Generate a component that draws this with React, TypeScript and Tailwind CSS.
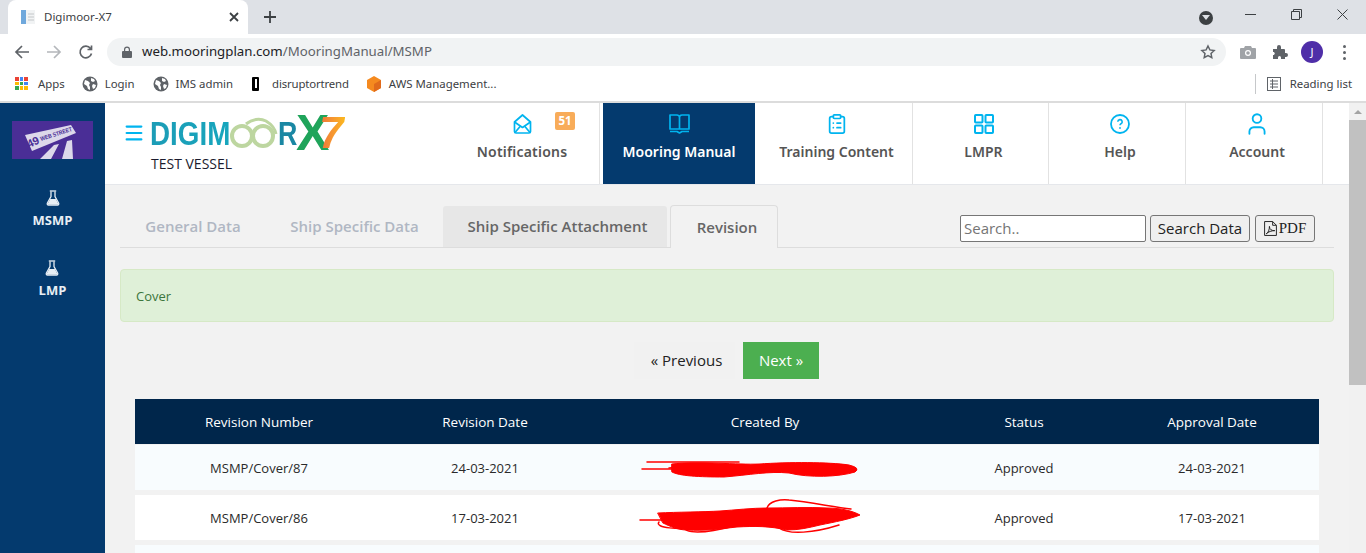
import { ClipboardList, Menu, User } from 'lucide-react'
import type { ReactNode } from 'react'

const GridIcon = () => (
  <svg width="20" height="20" viewBox="0 0 20 20" fill="none" stroke="#00b4ef" strokeWidth="2">
    <rect x="1" y="1" width="7.5" height="7.5" rx=".8" />
    <rect x="11.500" y="1" width="7.500" height="7.500" rx=".8" />
    <rect x="1" y="11.500" width="7.500" height="7.500" rx=".8" />
    <rect x="11.500" y="11.500" width="7.500" height="7.500" rx=".8" />
  </svg>
)

const HelpIcon = () => (
  <svg width="20" height="20" viewBox="0 0 20 20" fill="none" stroke="#00b4ef" strokeWidth="1.800">
    <circle cx="10" cy="10" r="9" />
    <path d="M7.800 7.800a2.200 2.200 0 1 1 3.200 2c-.7.400-1 .8-1 1.500" strokeWidth="1.600" />
    <circle cx="10" cy="14" r=".9" fill="#00b4ef" stroke="none" />
  </svg>
)

const navItems: { label: string; icon: ReactNode; width: string }[] = [
  { label: 'Training Content', icon: <ClipboardList size={22} strokeWidth={1.9} className="text-[#00b4ef]" />, width: 'w-[158px]' },
  { label: 'LMPR', icon: <GridIcon />, width: 'w-[136px]' },
  { label: 'Help', icon: <HelpIcon />, width: 'w-[137px]' },
  { label: 'Account', icon: <User size={26} strokeWidth={1.7} className="text-[#00b4ef]" />, width: 'w-[137px]' },
]

const rows = [
  { number: 'MSMP/Cover/87', date: '24-03-2021', bg: 'bg-[#f8fcfe]', scribble: 0 },
  { number: 'MSMP/Cover/86', date: '17-03-2021', bg: 'bg-white', scribble: 1 },
]

const Globe = () => (
  <svg width="16" height="16" viewBox="0 0 16 16">
    <circle cx="8" cy="8" r="7.500" fill="#5f6368" />
    <path d="M3 4l3 1 2 2-1 2 1 2v3l-2-1-1-3-3-2zM9 2l3 1 1 2-2 1-2-1zM11 8l3 1-1 3-2 1-1-3z" fill="#fff" />
  </svg>
)

const Flask = () => (
  <svg width="14" height="16" viewBox="0 0 14 16" fill="none">
    <path d="M5 1.500v5L1.400 13c-.5.900.1 2 1 2h9.200c.9 0 1.500-1.100 1-2L9 6.500v-5" stroke="#e8eef4" strokeWidth="1.300" />
    <path d="M4.200 9h5.600l2.400 4.400c.2.600 0 1-.6 1H2.400c-.6 0-.8-.4-.6-1z" fill="#e8eef4" />
    <path d="M3.800 1h6.400" stroke="#e8eef4" strokeWidth="1.300" />
  </svg>
)

const Scribble = ({ kind }: { kind: number }) =>
  kind === 0 ? (
    <svg width="220" height="30" viewBox="0 0 220 30" fill="none" stroke="#ff0000" strokeLinecap="round">
      <path d="M8 9h92M3 16h60" strokeWidth="1.500" />
      <path d="M33 11C60 8 100 12 120 11c30-2 70-2 90 1q12 3 6 7c-16 5-46 6-66 1-20-2-40 2-65 4-25 0-45-1-52-5z" fill="#ff0000" strokeWidth="1" />
      <path d="M30 15c20-2 30-3 45-2" strokeWidth="1.500" />
    </svg>
  ) : (
    <svg width="224" height="40" viewBox="0 0 224 40" fill="none" stroke="#ff0000" strokeLinecap="round">
      <path d="M1 22h60" strokeWidth="1.500" />
      <path d="M19 15c20-1 45-1 62-2 15-1 32-3 47-3 20 0 42-1 60 0 14 0 26 3 33 7-10 4-25 7-40 10-12 3-22 5-33 5-18-4-32-4-50-3-18 2-32 4-50 3-8 0-16-3-24-7z" fill="#ff0000" strokeWidth="1" />
      <path d="M128 10c2-7 14-9 22-8 20 2 45 7 62 9M20 24c-5 6 20 8 40 5M44 28c1 8 21 8 51 0M140 30c10 7 35 5 60-3" strokeWidth="1.500" />
    </svg>
  )

export default function App() {
  return (
    <div className="h-[553px] w-[1366px] overflow-hidden flex flex-col bg-white font-['Noto_Sans',sans-serif]">
      {/* tab strip */}
      <div className="h-[34px] shrink-0 bg-[#dee1e6] flex items-end pl-2">
        <div className="h-[34px] w-[240px] bg-white rounded-t-lg flex items-center pl-[12px] pr-[8px]">
          <svg width="16" height="16" viewBox="0 0 16 16" className="shrink-0 mr-[8px]">
            <rect x="1" y="1" width="14" height="14" fill="#f1f3f4" />
            <rect x="1" y="1" width="5" height="14" fill="#6fa8dc" />
            <path d="M8 5h6M8 8h6M8 11h6" stroke="#c4c7c9" />
          </svg>
          <span className="text-[11.500px] text-[#3c4043] flex-1">Digimoor-X7</span>
          <svg width="10" height="10" viewBox="0 0 10 10" stroke="#3c4043" strokeWidth="1.800" className="mr-[1px]">
            <path d="M1 1l8 8M9 1l-8 8" />
          </svg>
        </div>
        <svg width="14" height="14" viewBox="0 0 14 14" stroke="#3c4043" strokeWidth="1.800" className="ml-[15px] mb-[10px]">
          <path d="M7 1v12M1 7h12" />
        </svg>
        <div className="flex-1" />
        <div className="flex items-center h-full">
          <div className="w-[14px] h-[14px] rounded-full bg-[#3c4043] flex items-center justify-center mr-[32px] mt-[1px]">
            <div className="w-0 h-0 border-l-[4px] border-r-[4px] border-t-[5px] border-l-transparent border-r-transparent border-t-[#dee1e6]" />
          </div>
          <svg width="11" height="11" viewBox="0 0 11 11" stroke="#3c4043" className="mr-[35px] -mt-[6px]"><path d="M0 5.500h11" /></svg>
          <svg width="11" height="11" viewBox="0 0 11 11" fill="none" stroke="#3c4043" className="mr-[35px] -mt-[6px]"><path d="M.5 2.500h8v8h-8zM2.500 2.500v-2h8v8h-2" /></svg>
          <svg width="11" height="11" viewBox="0 0 11 11" stroke="#3c4043" className="mr-[18px] -mt-[6px]"><path d="M.5.5l10 10M10.500.5l-10 10" /></svg>
        </div>
      </div>

      {/* toolbar */}
      <div className="h-[34px] shrink-0 flex items-center pt-[2px] pl-[14px]">
        <svg width="16" height="16" viewBox="0 0 16 16" fill="none" stroke="#5f6368" strokeWidth="1.700"><path d="M15 8H2M8 2L2 8l6 6" /></svg>
        <svg width="16" height="16" viewBox="0 0 16 16" fill="none" stroke="#b4b7bb" strokeWidth="1.700" className="ml-[16px]"><path d="M1 8h13M8 2l6 6-6 6" /></svg>
        <svg width="16" height="16" viewBox="0 0 16 16" fill="none" stroke="#5f6368" strokeWidth="1.700" className="ml-[16px]"><path d="M13.500 9.500a5.800 5.800 0 1 1-1-5M13.500 1.500v4h-4" /></svg>
        <div className="ml-[13px] h-[28px] w-[1119px] rounded-full bg-[#f1f3f4] flex items-center pl-[15px] pr-[10px]">
          <svg width="10" height="12" viewBox="0 0 10 12" fill="#5f6368"><path d="M2 5V3.500a3 3 0 0 1 6 0V5h1a1 1 0 0 1 1 1v5a1 1 0 0 1-1 1H1a1 1 0 0 1-1-1V6a1 1 0 0 1 1-1zm1.200 0h3.600V3.500a1.800 1.800 0 0 0-3.600 0z" /></svg>
          <span className="ml-[10px] text-[13.250px] text-[#202124]">web.mooringplan.com<span className="text-[#5f6368]">/MooringManual/MSMP</span></span>
          <div className="flex-1" />
          <svg width="16" height="16" viewBox="0 0 24 24" fill="none" stroke="#5f6368" strokeWidth="2.200"><path d="M12 3l2.800 5.900 6.400.8-4.700 4.400 1.200 6.400L12 17.400l-5.700 3.100 1.200-6.400-4.700-4.400 6.400-.8z" /></svg>
        </div>
        <svg width="16" height="14" viewBox="0 0 16 14" fill="#a0a3a7" className="ml-[14px]"><path d="M5 1h6l1 2h3a1 1 0 0 1 1 1v9a1 1 0 0 1-1 1H1a1 1 0 0 1-1-1V4a1 1 0 0 1 1-1h3z" /><circle cx="8" cy="8" r="3" fill="#fff" /><circle cx="8" cy="8" r="1.800" fill="#a0a3a7" /></svg>
        <svg width="16" height="16" viewBox="0 0 16 16" fill="#5f6368" className="ml-[16px]"><path d="M1 5h4V3a2 2 0 0 1 4 0v2h3a1 1 0 0 1 1 1v3h1a2 2 0 0 1 0 4h-1v2H9v-1.500a1.500 1.500 0 0 0-3 0V15H1v-4h1a2 2 0 0 0 0-3H1z" /></svg>
        <div className="ml-[13px] w-[22px] h-[22px] rounded-full bg-[#4f2ea8] text-white text-[11px] flex items-center justify-center">J</div>
        <div className="ml-[20px] flex flex-col gap-[3px]">
          <div className="w-[3px] h-[3px] rounded-full bg-[#5f6368]" />
          <div className="w-[3px] h-[3px] rounded-full bg-[#5f6368]" />
          <div className="w-[3px] h-[3px] rounded-full bg-[#5f6368]" />
        </div>
      </div>

      {/* bookmarks */}
      <div className="h-[35px] shrink-0 flex items-center pb-[2px] pl-[15px] pr-[14px] text-[11.400px] text-[#3c4043] border-b-2 border-[#dcdcdc]">
        <div className="grid grid-cols-3 gap-[1px] w-[13px] h-[13px] shrink-0">
          <div className="bg-[#ea4335]" /><div className="bg-[#4285f4]" /><div className="bg-[#ea4335]" />
          <div className="bg-[#fbbc04]" /><div className="bg-[#34a853]" /><div className="bg-[#4285f4]" />
          <div className="bg-[#34a853]" /><div className="bg-[#fbbc04]" /><div className="bg-[#fbbc04]" />
        </div>
        <span className="ml-[10px]">Apps</span>
        <div className="ml-[17px]"><Globe /></div>
        <span className="ml-[7px]">Login</span>
        <div className="ml-[18px]"><Globe /></div>
        <span className="ml-[7px]">IMS admin</span>
        <div className="ml-[19px] w-[7px] h-[14px] bg-black rounded-[1px] flex items-center justify-center"><div className="w-[2px] h-[9px] bg-white" /></div>
        <span className="ml-[13px] tracking-[-0.15px]">disruptortrend</span>
        <svg width="16" height="18" viewBox="0 0 16 18" className="ml-[17px]">
          <path d="M8 1l7 4v8l-7 4-7-4V5z" fill="#f58a1f" />
          <path d="M8 9l7-4v8l-7 4z" fill="#e06a1b" />
        </svg>
        <span className="ml-[7px]">AWS Management...</span>
        <div className="flex-1" />
        <div className="w-px h-[20px] bg-[#c6c8ca]" />
        <svg width="14" height="14" viewBox="0 0 14 14" fill="none" stroke="#5f6368" className="ml-[11px]">
          <rect x=".5" y=".5" width="13" height="13" /><path d="M3 4h8M3 7h8M3 10h8M5.500 2v10" />
        </svg>
        <span className="ml-[9px]">Reading list</span>
      </div>

      <div className="flex flex-1 min-h-0 bg-[#f2f2f2]">
        {/* sidebar */}
        <aside className="w-[105px] shrink-0 bg-[#043a6e] flex flex-col items-center pt-[18px]">
          <svg width="81" height="38" viewBox="0 0 81 38">
            <rect width="81" height="38" fill="#4a2e96" />
            <path d="M13 14L59 4l5 8-44 18z" fill="#dcd8ea" />
            <path d="M28 38l14-14 5-1-8 15zM50 38l5-18 5-1 1 19z" fill="#dcd8ea" />
            <text x="17" y="27" fontSize="11" fontWeight="700" fill="#4a2e96" fontFamily="Liberation Sans, sans-serif" transform="rotate(-24 17 27)">49</text>
            <text x="29" y="20" fontSize="6" fontWeight="700" fill="#4a2e96" fontFamily="Liberation Sans, sans-serif" textLength="33" lengthAdjust="spacingAndGlyphs" transform="rotate(-18 29 20)">WEB STREET</text>
          </svg>
          <div className="mt-[31px] flex flex-col items-center gap-[6px] text-[13px] leading-[16px] font-bold text-[#e8eef4] font-['Open_Sans',sans-serif]">
            <Flask />
            <span>MSMP</span>
          </div>
          <div className="mt-[32px] flex flex-col items-center gap-[6px] text-[13px] leading-[16px] font-bold text-[#e8eef4] font-['Open_Sans',sans-serif]">
            <Flask />
            <span>LMP</span>
          </div>
        </aside>

        <div className="w-[1244px] shrink-0 min-w-0 flex flex-col">
          {/* top nav */}
          <header className="h-[82px] shrink-0 bg-white border-b border-[#e5e7eb] flex">
            <div className="flex w-[340px] pl-[18px] pt-[19px]">
              <Menu size={22} strokeWidth={2.400} className="text-[#00b4ef] shrink-0" />
              <div className="ml-[5px] -mt-[7px]">
                <div className="flex items-center h-[38px] w-[200px] font-['Liberation_Sans',sans-serif] leading-none">
                  <span className="w-[97px] shrink-0 -mr-[17px] text-[33.500px] font-bold scale-x-[.83] origin-left bg-linear-to-r from-[#1c9cb6] to-[#17a6bd] bg-clip-text text-transparent">DIGIM</span>
                  <svg width="48" height="38" viewBox="0 0 48 38" fill="none" stroke="#bdd6a0" className="shrink-0">
                    <circle cx="12" cy="21" r="10" strokeWidth="4" />
                    <circle cx="33" cy="21" r="10" strokeWidth="4" />
                    <path d="M16 9c6-5 14-6 20-3 5 3 9 8 10 13" strokeWidth="3" />
                  </svg>
                  <span className="w-[25px] shrink-0 -mr-[7px] text-[33.500px] font-bold scale-x-[.8] origin-left text-[#1a87a3]">R</span>
                  <span className="w-[24px] shrink-0 text-[50px] font-bold text-[#1fa45a] -mt-[2px]">X</span>
                  <span className="w-[26px] shrink-0 text-[44px] font-bold italic text-transparent bg-linear-to-r from-[#ee6f3a] to-[#fbb81c] bg-clip-text -mt-[2px] -ml-[1px]">7</span>
                </div>
                <div className="text-[14px] leading-[18px] text-[#1b1b2e] mt-[2px] ml-[1px] font-['Open_Sans',sans-serif]">TEST VESSEL</div>
              </div>
            </div>
            <nav className="flex text-[14px] font-semibold text-[#555]">
              <div className="relative w-[155px] flex flex-col items-center pt-[8px] border-r border-[#e2e2e2]">
                <div className="h-[26px] flex items-center">
                  <svg width="19" height="20" viewBox="0 0 19 20" fill="none" stroke="#00b4ef" strokeWidth="1.700" strokeLinejoin="round">
                    <path d="M1.500 8L9.500 1l8 7v9.500a1.500 1.500 0 0 1-1.500 1.500H3a1.500 1.500 0 0 1-1.500-1.500z" />
                    <path d="M1.500 8l8 5.500 8-5.500M2 18.500l5.500-6.500M17 18.500L11.500 12" />
                  </svg>
                </div>
                <span className="mt-[4px] tracking-[.2px]">Notifications</span>
                <span className="absolute left-[110px] top-[9px] w-[20px] h-[18px] bg-[#f8ac59] rounded-[2px] text-white text-[11.500px] font-bold flex items-center justify-center">51</span>
              </div>
              <div className="w-[3px]" />
              <div className="w-[152px] bg-[#043a6e] text-white flex flex-col items-center pt-[8px]">
                <div className="h-[26px] flex items-center">
                  <svg width="21" height="20" viewBox="0 0 21 20" fill="none" stroke="#00b4ef" strokeWidth="1.700" strokeLinejoin="round">
                    <path d="M1 1h7a2.500 2.500 0 0 1 2.500 2.500V15H1zM20 1h-7a2.500 2.500 0 0 0-2.500 2.500V15H20z" />
                    <path d="M1 17.500h7l2.500 1.500 2.500-1.500h7" />
                  </svg>
                </div>
                <span className="mt-[4px]">Mooring Manual</span>
              </div>
              {navItems.map((item) => (
                <div key={item.label} className={`${item.width} flex flex-col items-center pt-[8px] pl-[6px] border-r border-[#e2e2e2]`}>
                  <div className="h-[26px] flex items-center">{item.icon}</div>
                  <span className="mt-[4px]">{item.label}</span>
                </div>
              ))}
            </nav>
          </header>

          <main className="flex-1 min-h-0 px-[15px] font-['Open_Sans',sans-serif]">
            {/* tabs */}
            <div className="mt-[20px] h-[43px] flex items-end justify-between border-b border-[#dddddd] relative">
              <div className="flex items-end text-[15px] font-semibold">
                <div className="h-[41px] w-[146px] flex items-center justify-center text-[#b0b7c3]">General Data</div>
                <div className="h-[41px] w-[177px] flex items-center justify-center text-[#b0b7c3]">Ship Specific Data</div>
                <div className="h-[41px] w-[224px] flex items-center justify-center pl-[5px] bg-[#e7e7e7] text-[#666] rounded-t-[3px]">Ship Specific Attachment</div>
                <div className="ml-[3px] h-[43px] -mb-px w-[108px] flex items-center justify-center pl-[6px] text-[#666] border border-b-0 border-[#dddddd] rounded-t-[4px] bg-[#f2f2f2]">Revision</div>
              </div>
              <div className="flex items-center gap-[4px] pb-[5px] pr-[19px]">
                <input placeholder="Search.." className="w-[186px] h-[27px] bg-white border border-[#767676] rounded-[2px] px-[3px] pb-[2px] text-[15px] placeholder:text-[#757575]" />
                <button className="h-[27px] w-[100px] border border-[#767676] rounded-[3px] bg-[#efefef] text-[15px] text-[#222]">Search Data</button>
                <button className="ml-[1px] h-[27px] w-[60px] border border-[#767676] rounded-[3px] bg-[#efefef] text-[15px] text-[#222] font-['Liberation_Serif',serif] flex items-center justify-center gap-[2px]">
                  <svg width="13" height="15" viewBox="0 0 12 14" fill="none" stroke="#222" strokeWidth=".9">
                    <path d="M.5.5h7.500l3.500 3.500v9.500H.5zM8 .5V4h3.500" />
                    <path d="M2 12c2-1 3-4 3-7 0 3 2 4 5 4-3 0-6 1-8 3z" />
                  </svg>
                  PDF
                </button>
              </div>
            </div>

            {/* alert */}
            <div className="mt-[21px] h-[53px] flex items-center pt-[2px] px-[15px] bg-[#dff0d8] border border-[#d6e9c6] rounded-[4px] text-[13px] text-[#3c763d]">Cover</div>

            {/* pager */}
            <div className="mt-[20px] flex justify-center text-[15px] pr-[1px]">
              <button className="h-[37px] w-[101px] pl-[4px] bg-[#f1f1f1] text-[#222]">« Previous</button>
              <button className="ml-[8px] h-[37px] w-[76px] bg-[#4caf50] text-white">Next »</button>
            </div>

            {/* table */}
            <div className="mt-[20px] mx-[15px] text-[13px] text-[#2a2a2a]">
              <div className="grid grid-cols-[248px_204px_356px_162px_214px] h-[45px] mb-px pt-[2px] items-center text-center bg-[#00264b] text-white text-[13.500px] font-medium">
                <div>Revision Number</div>
                <div>Revision Date</div>
                <div>Created By</div>
                <div>Status</div>
                <div>Approval Date</div>
              </div>
              <div className="flex flex-col gap-[5px]">
                {rows.map((row) => (
                  <div key={row.number} className={`grid grid-cols-[248px_204px_356px_162px_214px] h-[45px] items-center text-center ${row.bg}`}>
                    <div className="pt-[2px]">{row.number}</div>
                    <div className="pt-[2px]">{row.date}</div>
                    <div className={`flex justify-center ${row.scribble === 0 ? 'pr-[32px]' : 'pr-[28px]'}`}><Scribble kind={row.scribble} /></div>
                    <div className="pt-[2px]">Approved</div>
                    <div className="pt-[2px]">{row.date}</div>
                  </div>
                ))}
                <div className="h-[45px] bg-[#f8fcfe]" />
              </div>
            </div>
          </main>
        </div>

        {/* scrollbar */}
        <div className="w-[17px] shrink-0 bg-[#f1f1f1] flex flex-col items-center">
          <div className="h-[17px] flex items-center justify-center">
            <div className="w-0 h-0 border-l-[4px] border-r-[4px] border-b-[4px] border-l-transparent border-r-transparent border-b-[#a3a3a3]" />
          </div>
          <div className="w-full h-[265px] bg-[#c1c1c1]" />
        </div>
      </div>
    </div>
  )
}
